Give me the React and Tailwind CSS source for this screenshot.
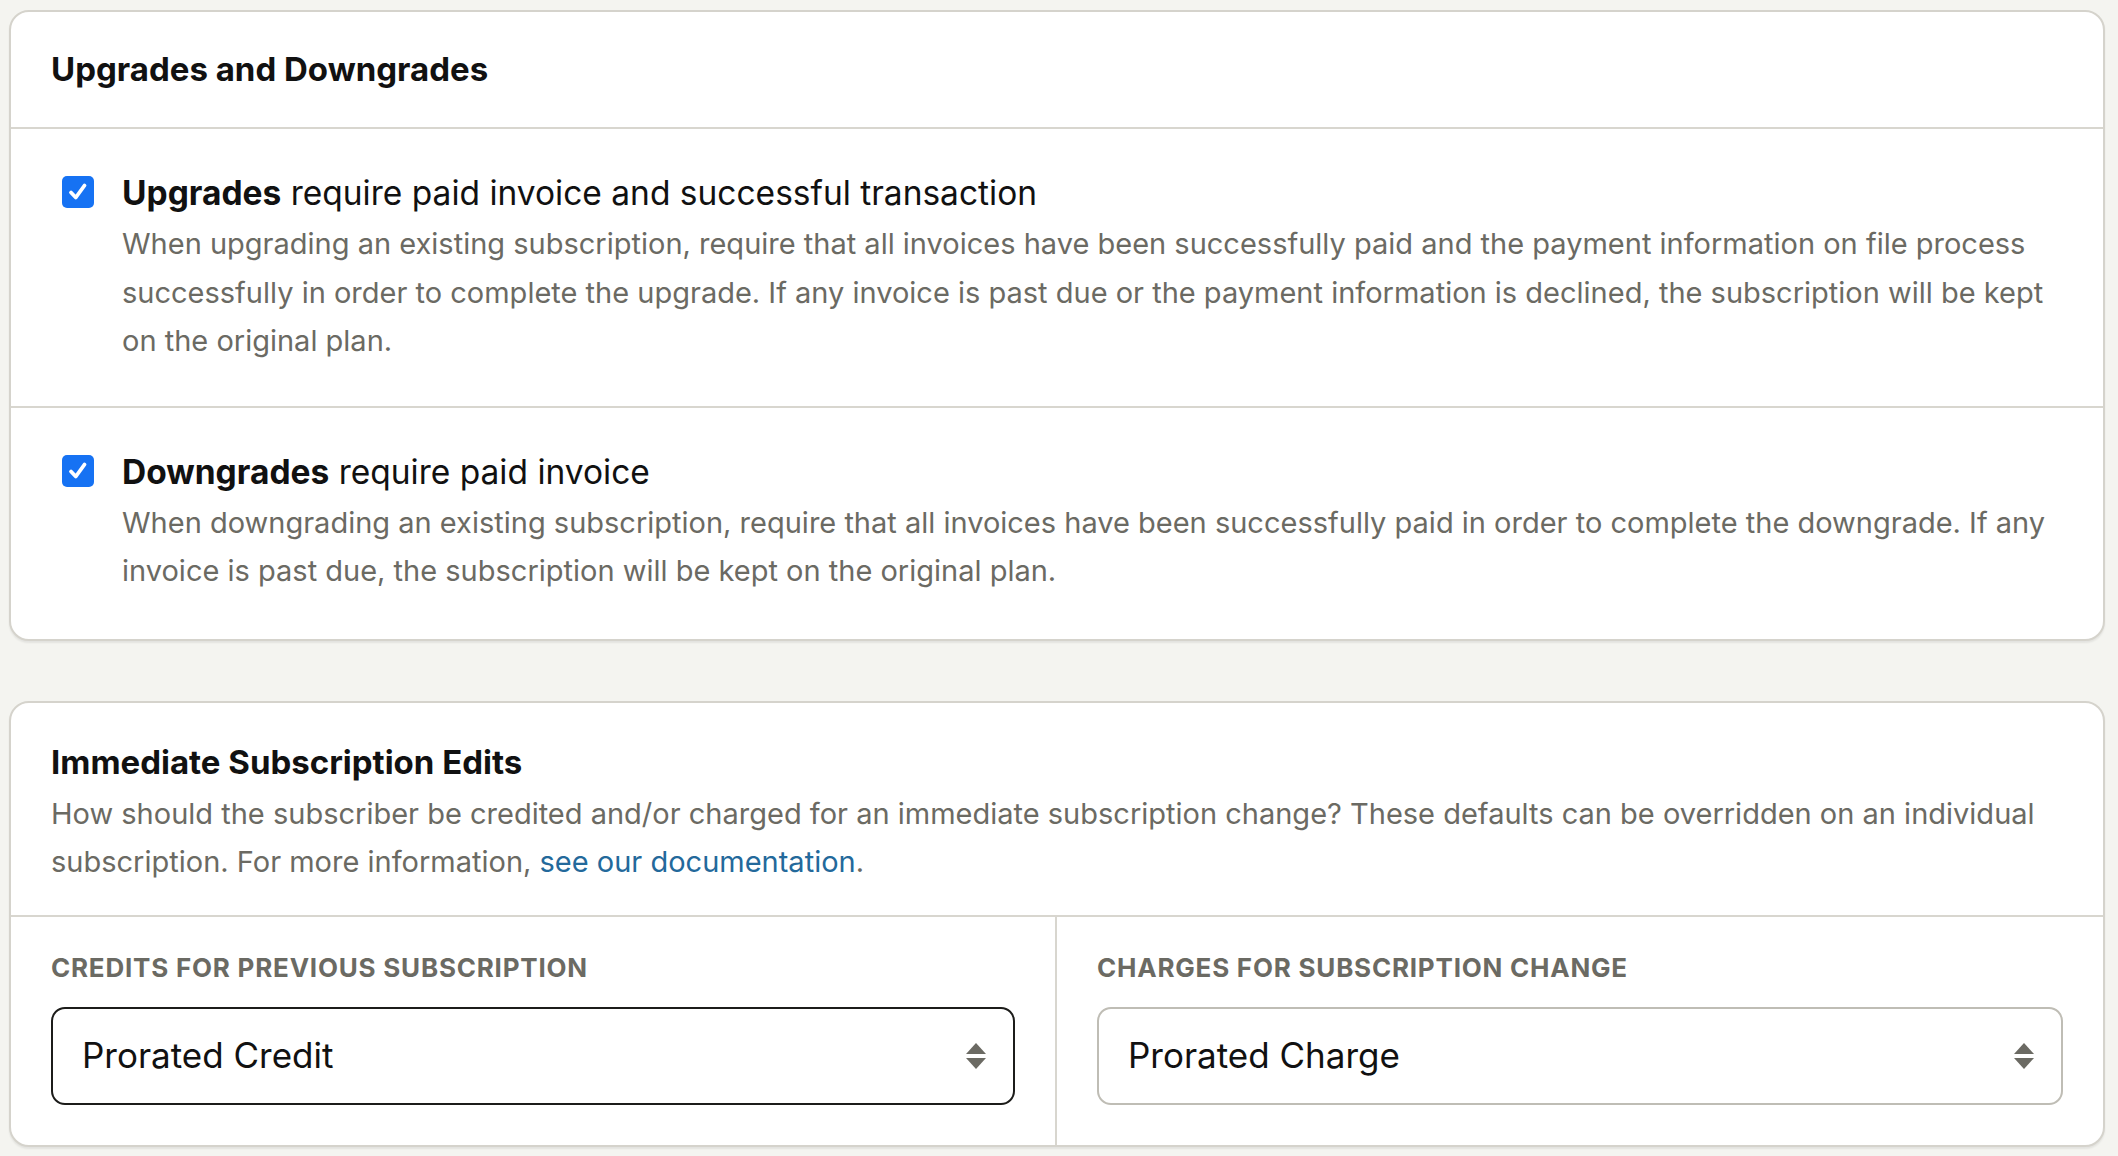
import React from 'react';

const font = { fontFamily: 'Inter, "Noto Sans", sans-serif' };

const Checkbox = () => (
    <div className="w-[32px] h-[32px] rounded-[5px] bg-[#1672f3] flex items-center justify-center shrink-0">
        <svg width="22" height="22" viewBox="0 0 22 22" fill="none">
            <path d="M4 11.5 L8.8 16.5 L17.5 4.5" stroke="white" strokeWidth="3.8" strokeLinecap="round" strokeLinejoin="round" />
        </svg>
    </div>
);

const SortArrows = () => (
    <svg width="22" height="28" viewBox="0 0 22 28" className="shrink-0">
        <path d="M11 1 L21 12 L1 12 Z" fill="#6b6a63" />
        <path d="M1 16 L21 16 L11 27 Z" fill="#6b6a63" />
    </svg>
);

const Rule = ({ title, rest, children, last }) => (
    <div className={`flex gap-[28px] pl-[51px] pr-[46px] pt-[42px] ${last ? 'pb-[43px]' : 'pb-[40px] border-b-2 border-[#d8d6cf]'}`}>
        <div className="pt-[5px]">
            <Checkbox />
        </div>
        <div className="flex flex-col">
            <div className="text-[33.5px] leading-[44px] text-[#111111]">
                <span className="font-bold">{title}</span> {rest}
            </div>
            <p className="text-[29px] leading-[48.5px] text-[#6b6a63] mt-[5px]">{children}</p>
        </div>
    </div>
);

const SelectBox = ({ value, focused }) => (
    <div className={`h-[98px] rounded-[14px] bg-white flex items-center justify-between pl-[29px] pr-[26px] ${focused ? 'border-2 border-[#1c1c1a]' : 'border-2 border-[#bfbdb5]'}`}>
        <span className="text-[35px] text-[#111111]">{value}</span>
        <SortArrows />
    </div>
);

export default function App() {
    return (
        <div className="min-h-screen bg-[#f4f4f0] pl-[9px] pr-[13px] pt-[10px] pb-[11px] flex flex-col gap-[60px]" style={font}>
            <section className="bg-white rounded-[20px] border-2 border-[#d5d3cc] shadow-[0_2px_2px_rgba(0,0,0,0.07)]">
                <div className="px-[40px] h-[117px] flex items-center border-b-2 border-[#d8d6cf]">
                    <h2 className="text-[33px] font-bold text-[#111111]">Upgrades and Downgrades</h2>
                </div>
                <Rule title="Upgrades" rest="require paid invoice and successful transaction">
                    When upgrading an existing subscription, require that all invoices have been successfully paid and the payment information on file process successfully in order to complete the upgrade. If any invoice is past due or the payment information is declined, the subscription will be kept on the original plan.
                </Rule>
                <Rule title="Downgrades" rest="require paid invoice" last>
                    When downgrading an existing subscription, require that all invoices have been successfully paid in order to complete the downgrade. If any invoice is past due, the subscription will be kept on the original plan.
                </Rule>
            </section>

            <section className="bg-white rounded-[20px] border-2 border-[#d5d3cc] shadow-[0_2px_2px_rgba(0,0,0,0.07)]">
                <div className="px-[40px] pt-[38px] pb-[28px] border-b-2 border-[#d8d6cf]">
                    <h2 className="text-[33px] leading-[42px] font-bold text-[#111111]">Immediate Subscription Edits</h2>
                    <p className="text-[29px] leading-[48.5px] text-[#6b6a63] mt-[7px]">
                        How should the subscriber be credited and/or charged for an immediate subscription change? These defaults can be overridden on an individual subscription. For more information, <a href="#" className="text-[#23699b]">see our documentation</a>.
                    </p>
                </div>
                <div className="grid grid-cols-2">
                    <div className="px-[40px] pt-[36px] pb-[40px] border-r-2 border-[#d8d6cf]">
                        <div className="text-[26px] leading-[30px] tracking-[0.03em] font-bold uppercase text-[#6b6a63] mb-[24px]">Credits for previous subscription</div>
                        <SelectBox value="Prorated Credit" focused />
                    </div>
                    <div className="px-[40px] pt-[36px] pb-[40px]">
                        <div className="text-[26px] leading-[30px] tracking-[0.03em] font-bold uppercase text-[#6b6a63] mb-[24px]">Charges for subscription change</div>
                        <SelectBox value="Prorated Charge" />
                    </div>
                </div>
            </section>
        </div>
    );
}
